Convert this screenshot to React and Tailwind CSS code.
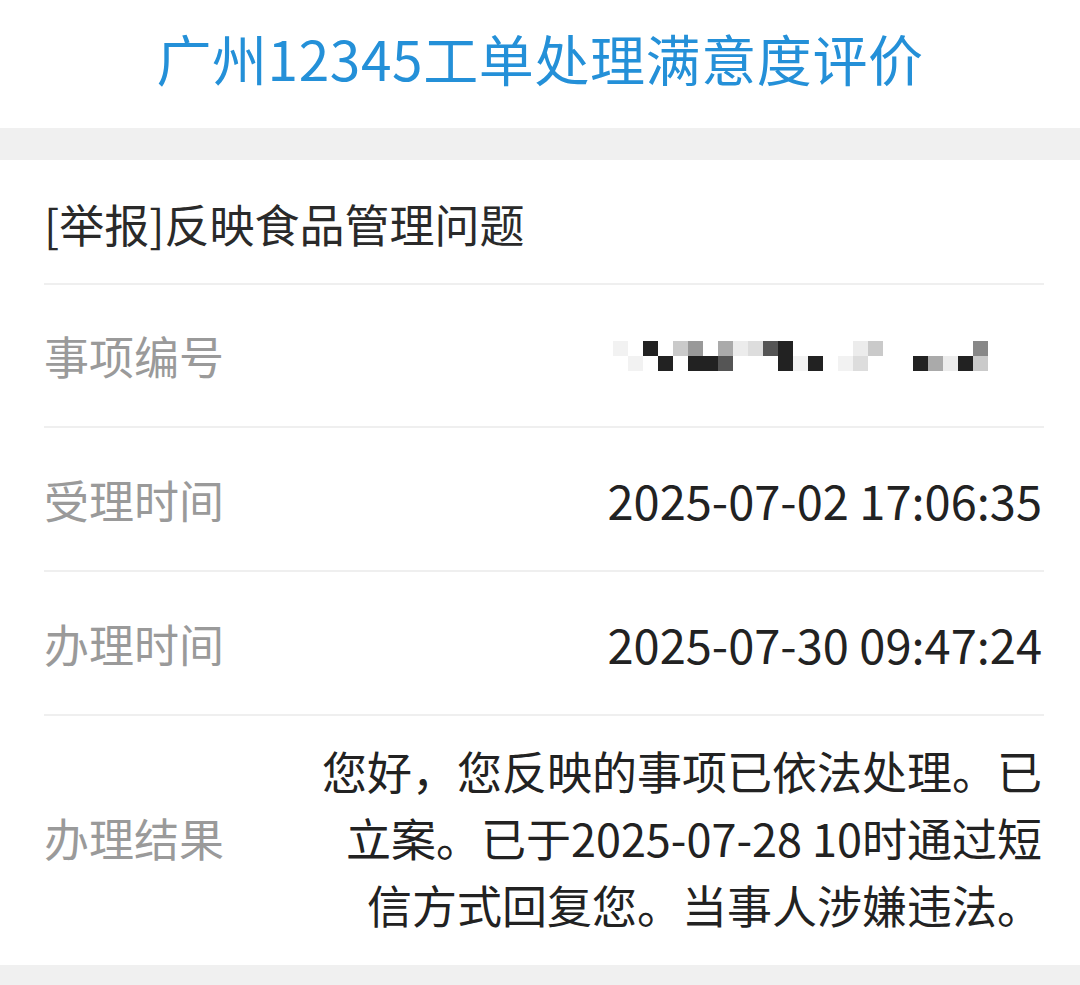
const MOSAIC = [
  ['a', '_', 'd', '_', 'c', 'g', '_', 'h', 'e', 'l', 'm', 'd', '_', '_', '_', '_', 'e', 'c', '_', '_', '_', '_', '_', '_', 'n'],
  ['_', 'a', '_', 'd', '_', 'd', 'd', 'm', '_', '_', '_', 'd', 'a', 'd', '_', 'a', 'l', '_', '_', '_', 'd', 'h', 'e', 'd', 'c'],
];

const SHADE = {
  _: 'bg-white',
  a: 'bg-[#f2f2f2]',
  e: 'bg-[#ececec]',
  l: 'bg-[#dddddd]',
  c: 'bg-[#cacaca]',
  h: 'bg-[#aaaaaa]',
  g: 'bg-[#999999]',
  n: 'bg-[#888888]',
  m: 'bg-[#555555]',
  d: 'bg-[#222222]',
};

const FONT = "font-['Noto_Sans_CJK_SC','Noto_Sans',sans-serif]";

function Mosaic() {
  return (
    <div className="mr-[56px] grid grid-cols-[repeat(25,15px)] blur-[0.6px]">
      {MOSAIC.flat().map((k, i) => (
        <div key={i} className={`h-[15px] ${SHADE[k]}`} />
      ))}
    </div>
  );
}

function Row({ label, children, className = '' }) {
  return (
    <div className={`flex items-center justify-between border-b-2 border-[#efefef] ${className}`}>
      <span className="text-[45px] leading-none text-[#9a9a9a]">{label}</span>
      {children}
    </div>
  );
}

export default function App() {
  return (
    <div className={`h-[985px] w-[1080px] overflow-hidden bg-[#f0f0f0] ${FONT}`}>
      {/* 标题 */}
      <header className="flex h-[128px] items-center justify-center bg-white pb-[14px]">
        <h1 className="text-[55px] leading-none tracking-[0.6px] text-[#2490d8]">广州12345工单处理满意度评价</h1>
      </header>

      <section className="mt-[32px] h-[805px] bg-white pl-[44px] pr-[36px]">
        <div className="flex h-[125px] items-center border-b-2 border-[#efefef] pt-[4px]">
          <span className="text-[45px] leading-none text-[#2a2a2a]">[举报]反映食品管理问题</span>
        </div>

        <Row label="事项编号" className="h-[143px]">
          <Mosaic />
        </Row>

        <Row label="受理时间" className="h-[144px]">
          <span className="mr-[2px] text-[47px] leading-none text-[#222]">2025-07-02 17:06:35</span>
        </Row>

        <Row label="办理时间" className="h-[144px]">
          <span className="mr-[2px] text-[47px] leading-none text-[#222]">2025-07-30 09:47:24</span>
        </Row>

        <div className="flex h-[249px] items-center justify-between pb-[6px]">
          <span className="text-[45px] leading-none text-[#9a9a9a]">办理结果</span>
          <p className="mr-[2px] text-right text-[45px] leading-[67px] text-[#222]">
            您好，您反映的事项已依法处理。已
            <br />
            立案。已于2025-07-28 10时通过短
            <br />
            信方式回复您。当事人涉嫌违法。
          </p>
        </div>
      </section>
    </div>
  );
}
